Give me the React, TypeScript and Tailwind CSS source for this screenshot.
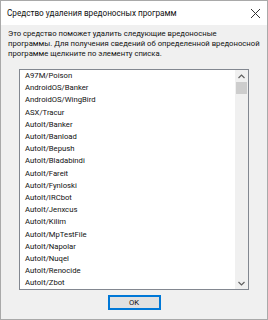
import React from "react";

const items = [
  "A97M/Poison",
  "AndroidOS/Banker",
  "AndroidOS/WingBird",
  "ASX/Tracur",
  "AutoIt/Banker",
  "AutoIt/Banload",
  "AutoIt/Bepush",
  "AutoIt/Bladabindi",
  "AutoIt/Fareit",
  "AutoIt/Fynloski",
  "AutoIt/IRCbot",
  "AutoIt/Jenxcus",
  "AutoIt/Kilim",
  "AutoIt/MpTestFile",
  "AutoIt/Napolar",
  "AutoIt/Nuqel",
  "AutoIt/Renocide",
  "AutoIt/Zbot",
];

export default function App() {
  return (
    <div
      className="w-[268px] h-[320px] flex flex-col bg-[#f0f0f0] border border-[#a9a9a9] text-black overflow-hidden"
      style={{ fontFamily: 'Roboto, "Noto Sans", sans-serif' }}
    >
      <div className="h-[24px] shrink-0 bg-white flex items-center justify-between pl-[6px] pr-[5px]">
        <span className="text-[8.2px] text-[#111] whitespace-nowrap">Средство удаления вредоносных программ</span>
        <svg width="11" height="11" viewBox="0 0 11 11" className="mr-[1px]">
          <path d="M1 1 L10 10 M10 1 L1 10" stroke="#333" strokeWidth="1" fill="none" />
        </svg>
      </div>
      <div className="flex flex-col flex-1 pt-[4px]">
        <p className="pl-[7px] text-[7.7px] leading-[10px] text-[#111] whitespace-nowrap">
          Это средство поможет удалить следующие вредоносные
          <br />
          программы. Для получения сведений об определенной вредоносной
          <br />
          программе щелкните по элементу списка.
        </p>
        <div className="ml-[18px] mt-[10px] w-[230px] h-[221px] flex border border-[#828790] bg-white">
          <div className="flex-1 pl-[5px] text-[7.7px] leading-[12.2px] text-[#111] overflow-hidden">
            {items.map((it) => (
              <div key={it} className="whitespace-nowrap">
                {it}
              </div>
            ))}
          </div>
          <div className="w-[13px] h-full bg-[#f0f0f0] flex flex-col">
            <div className="h-[12px] flex items-center justify-center">
              <svg width="7" height="5" viewBox="0 0 7 5">
                <path d="M0.5 4 L3.5 1 L6.5 4" stroke="#606060" strokeWidth="1.2" fill="none" />
              </svg>
            </div>
            <div className="h-[12px] mx-[1px] bg-[#cdcdcd]" />
            <div className="flex-1" />
            <div className="h-[12px] flex items-center justify-center">
              <svg width="7" height="5" viewBox="0 0 7 5">
                <path d="M0.5 1 L3.5 4 L6.5 1" stroke="#606060" strokeWidth="1.2" fill="none" />
              </svg>
            </div>
          </div>
        </div>
        <div className="flex justify-center mt-[5px]">
          <button className="w-[53px] h-[15px] bg-[#e1e1e1] border border-[#0078d7] shadow-[inset_0_0_0_1px_#0078d7] text-[7.7px] leading-none text-[#111] flex items-center justify-center">
            OK
          </button>
        </div>
      </div>
    </div>
  );
}
